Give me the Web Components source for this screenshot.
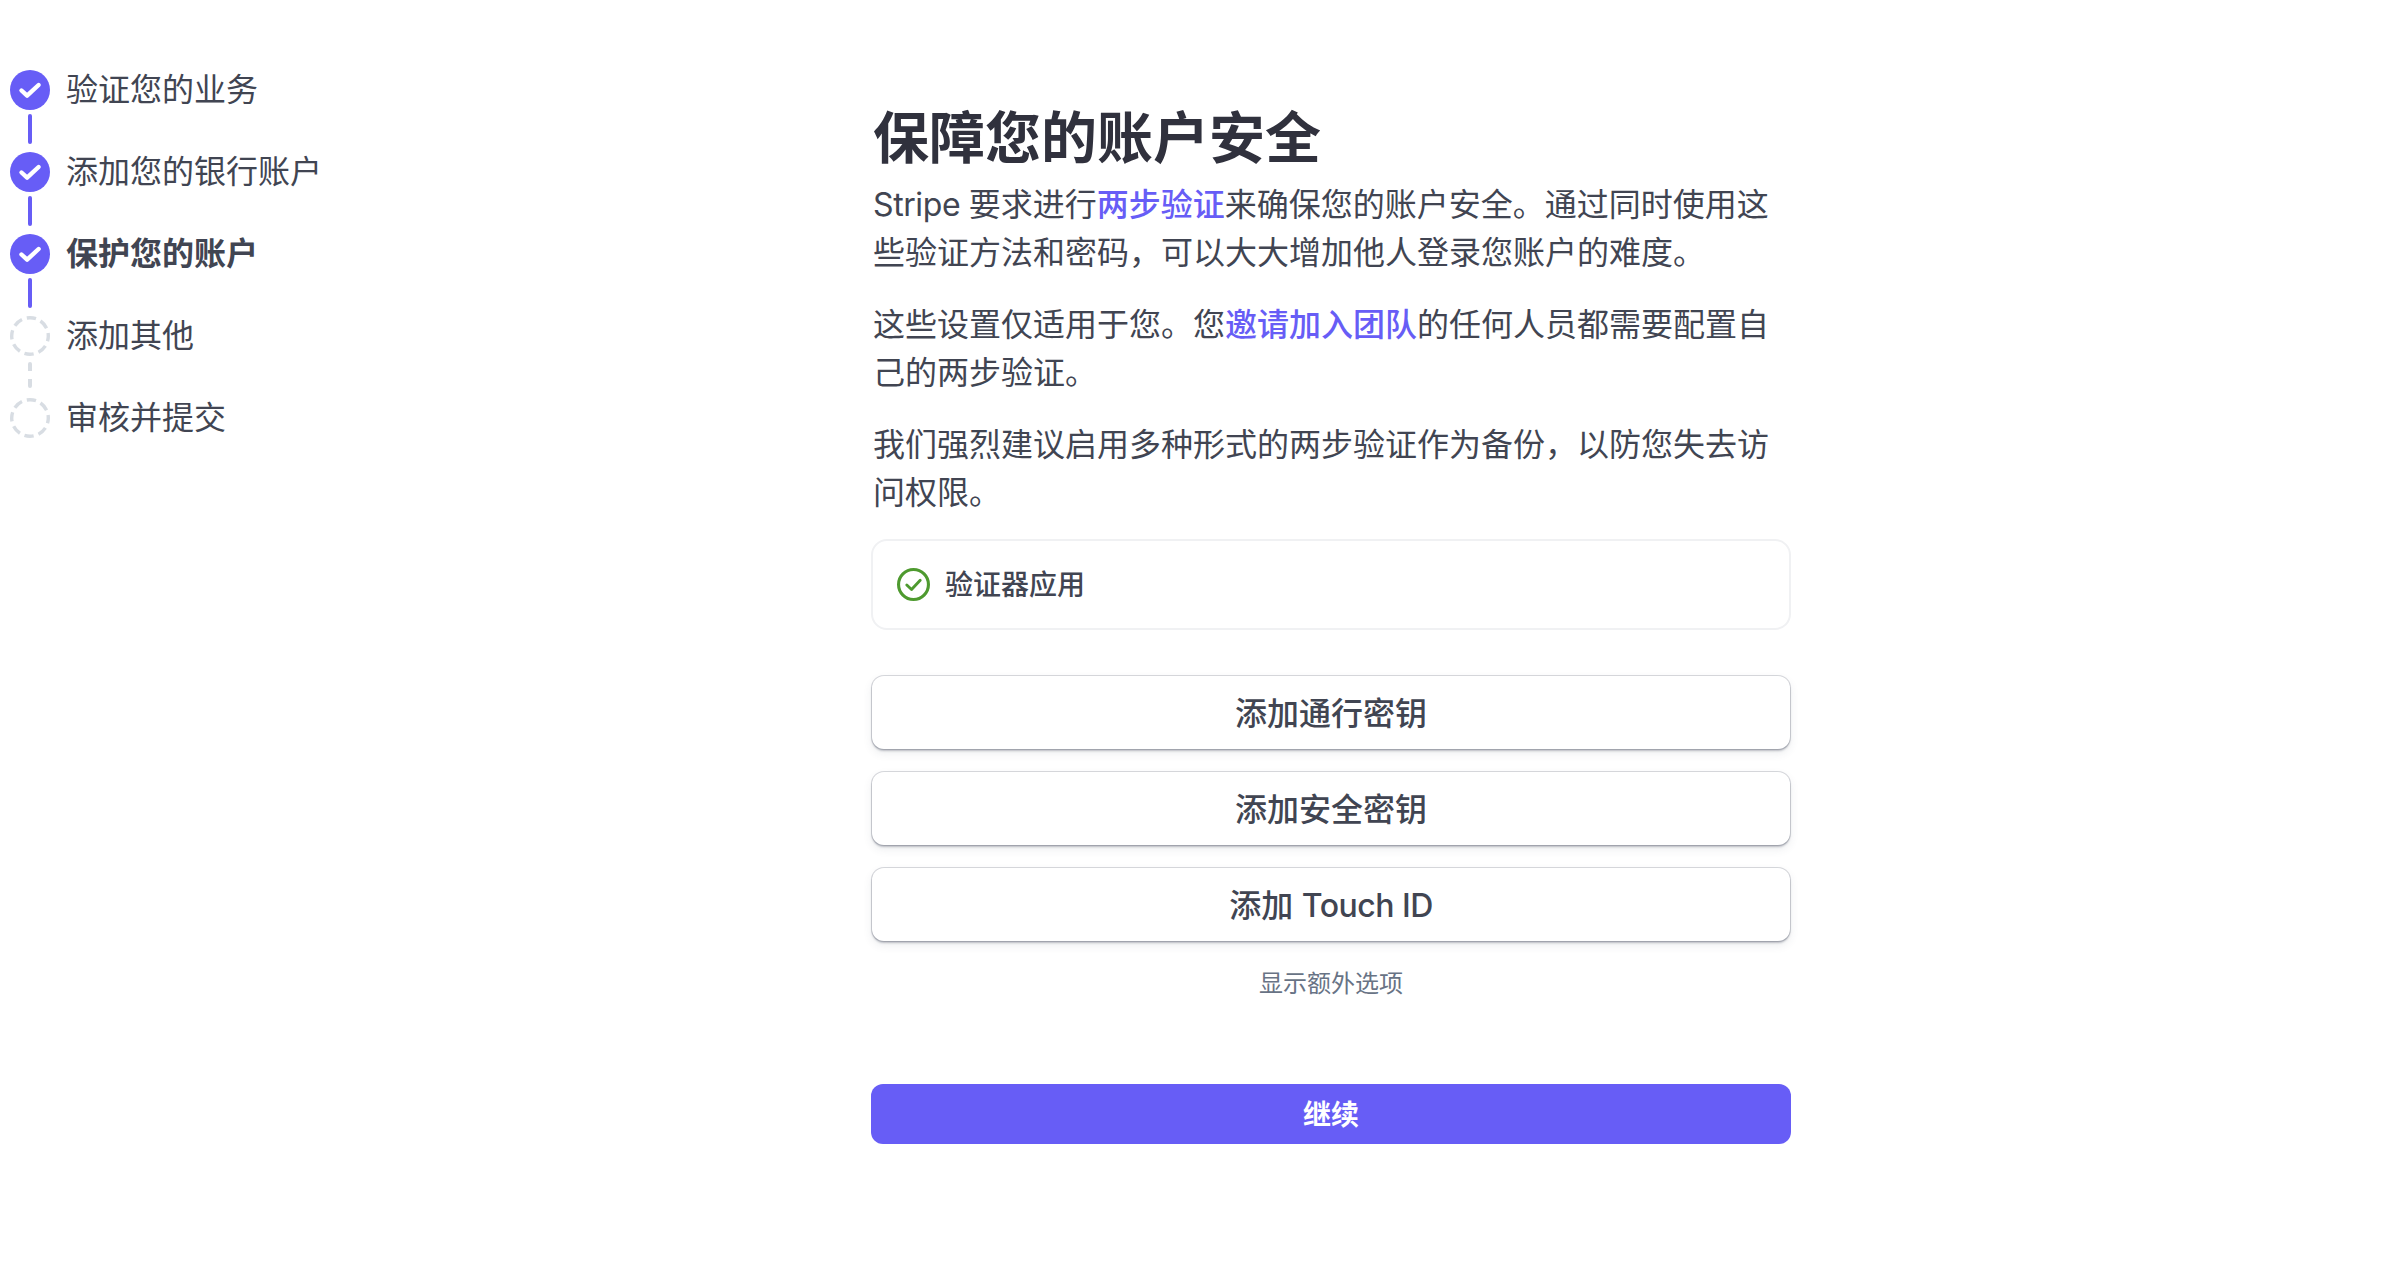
<!DOCTYPE html>
<html lang="zh">
<head>
<meta charset="utf-8">
<title>保障您的账户安全</title>
<style>
  html, body { margin: 0; background: #fff; }
  body {
    font-family: Inter, "Noto Sans CJK SC", sans-serif;
    color: #414552;
  }
  .latin { letter-spacing: -.4px; }
  .latin-btn { letter-spacing: -.5px; }
</style>
</head>
<body>
<setup-page>
  <step-list slot="nav">
    <step-item status="done">验证您的业务</step-item>
    <step-item status="done">添加您的银行账户</step-item>
    <step-item status="done" current>保护您的账户</step-item>
    <step-item status="todo">添加其他</step-item>
    <step-item status="todo" last>审核并提交</step-item>
  </step-list>

  <h-title>保障您的账户安全</h-title>
  <text-para><span class="latin">Stripe </span>要求进行<a href="#">两步验证</a>来确保您的账户安全。通过同时使用这些验证方法和密码，可以大大增加他人登录您账户的难度。</text-para>
  <text-para>这些设置仅适用于您。您<a href="#">邀请加入团队</a>的任何人员都需要配置自己的两步验证。</text-para>
  <text-para>我们强烈建议启用多种形式的两步验证作为备份，以防您失去访问权限。</text-para>
  <method-card>验证器应用</method-card>
  <action-button>添加通行密钥</action-button>
  <action-button>添加安全密钥</action-button>
  <action-button>添加 <span class="latin-btn">Touch ID</span></action-button>
  <more-link>显示额外选项</more-link>
  <action-button primary>继续</action-button>
</setup-page>

<script>
const pageTemplate = document.createElement('template');
pageTemplate.innerHTML = `
  <style>
    :host {
      display: grid;
      grid-template-columns: 871px 922px;
      min-height: 1270px;
      box-sizing: border-box;
    }
    nav { padding: 70px 0 0 10px; }
    main { padding: 98px 0 0 0; display: flex; flex-direction: column; }
  </style>
  <nav><slot name="nav"></slot></nav>
  <main><slot></slot></main>
`;

class SetupPage extends HTMLElement {
  constructor() {
    super();
    this.attachShadow({mode: 'open'});
    this.shadowRoot.append(pageTemplate.content.cloneNode(true));
  }
}

const listTemplate = document.createElement('template');
listTemplate.innerHTML = `
  <style>
    :host { display: flex; flex-direction: column; }
  </style>
  <slot></slot>
`;

class StepList extends HTMLElement {
  constructor() {
    super();
    this.attachShadow({mode: 'open'});
    this.shadowRoot.append(listTemplate.content.cloneNode(true));
  }
}

const stepTemplate = document.createElement('template');
stepTemplate.innerHTML = `
  <style>
    :host {
      display: grid;
      grid-template-columns: 40px auto;
      column-gap: 16px;
      font-size: 32px;
      line-height: 40px;
      color: #414552;
    }
    :host([current]) { font-weight: 600; }
    .icon { display: block; width: 40px; height: 40px; }
    .link {
      width: 4px;
      height: 30px;
      margin: 4px 0 8px 18px;
      border-radius: 2px;
      background: #675df6;
    }
    :host([status="todo"]) .link {
      height: 26px;
      margin: 6px 0 10px 18px;
      background: repeating-linear-gradient(#d8dde3 0 9px, transparent 9px 17px);
    }
    :host([last]) .link { display: none; }
  </style>
  <svg class="icon" viewBox="0 0 40 40"></svg>
  <span class="label"><slot></slot></span>
  <div class="link"></div>
`;

class StepItem extends HTMLElement {
  constructor() {
    super();
    this.attachShadow({mode: 'open'});
    this.shadowRoot.append(stepTemplate.content.cloneNode(true));
  }

  connectedCallback() {
    const icon = this.shadowRoot.querySelector('.icon');
    if (this.getAttribute('status') == 'done') {
      icon.innerHTML = `
        <circle cx="20" cy="20" r="20" fill="#675df6"/>
        <path d="M11.5 20.5l5.6 5.2L28.6 15" fill="none" stroke="#fff" stroke-width="4.4" stroke-linecap="round" stroke-linejoin="round"/>`;
    } else {
      icon.innerHTML = `
        <circle cx="20" cy="20" r="18.3" fill="none" stroke="#d8dde3" stroke-width="3.4" stroke-dasharray="9.4 5" stroke-dashoffset="4"/>`;
    }
  }
}

const titleTemplate = document.createElement('template');
titleTemplate.innerHTML = `
  <style>
    :host {
      display: block;
      margin: 0 0 3px 2px;
      font-size: 56px;
      line-height: 80px;
      font-weight: 700;
      color: #30313d;
    }
  </style>
  <slot></slot>
`;

class HTitle extends HTMLElement {
  constructor() {
    super();
    this.attachShadow({mode: 'open'});
    this.shadowRoot.append(titleTemplate.content.cloneNode(true));
  }
}

const paraTemplate = document.createElement('template');
paraTemplate.innerHTML = `
  <style>
    :host {
      display: block;
      margin: 0 0 24px 2px;
      width: 900px;
      font-size: 32px;
      line-height: 48px;
      color: #414552;
    }
    :host(:nth-of-type(3)) { margin-bottom: 22px; }
    ::slotted(a) { color: #675df6; text-decoration: none; font-weight: 500; }
  </style>
  <slot></slot>
`;

class TextPara extends HTMLElement {
  constructor() {
    super();
    this.attachShadow({mode: 'open'});
    this.shadowRoot.append(paraTemplate.content.cloneNode(true));
  }
}

const cardTemplate = document.createElement('template');
cardTemplate.innerHTML = `
  <style>
    :host {
      display: flex;
      align-items: center;
      gap: 16px;
      box-sizing: border-box;
      width: 920px;
      height: 91px;
      margin: 0 0 46px 0;
      padding: 0 24px 1px;
      border: 2px solid #f0f1f3;
      border-radius: 16px;
      font-size: 28px;
      font-weight: 500;
      color: #414552;
    }
    svg { display: block; width: 33px; height: 33px; flex: none; }
    span { position: relative; top: -1px; left: -1px; }
  </style>
  <svg viewBox="0 0 32 32" fill="none" stroke="#4e9a2f">
    <circle cx="16" cy="16" r="14.5" stroke-width="3"/>
    <path d="M9.5 16.5l4.6 4.4 8.4-9" stroke-width="2.8" stroke-linecap="round" stroke-linejoin="round"/>
  </svg>
  <span><slot></slot></span>
`;

class MethodCard extends HTMLElement {
  constructor() {
    super();
    this.attachShadow({mode: 'open'});
    this.shadowRoot.append(cardTemplate.content.cloneNode(true));
  }
}

const buttonTemplate = document.createElement('template');
buttonTemplate.innerHTML = `
  <style>
    :host {
      display: flex;
      align-items: center;
      justify-content: center;
      box-sizing: border-box;
      width: 918px;
      height: 73px;
      margin: 0 0 23px 1px;
      padding-bottom: 4px;
      border-radius: 12px;
      background: #fff;
      font-size: 32px;
      font-weight: 500;
      color: #414552;
      box-shadow: 0 0 0 1px rgba(60, 66, 87, .2), 0 2px 2px rgba(60, 66, 87, .3), 0 4px 10px rgba(60, 66, 87, .1);
    }
    :host([primary]) {
      width: 920px;
      height: 60px;
      margin: 0;
      padding-bottom: 2px;
      background: #675df6;
      color: #fff;
      font-size: 28px;
      font-weight: 600;
      box-shadow: none;
    }
  </style>
  <span><slot></slot></span>
`;

class ActionButton extends HTMLElement {
  constructor() {
    super();
    this.attachShadow({mode: 'open'});
    this.shadowRoot.append(buttonTemplate.content.cloneNode(true));
  }
}

const moreTemplate = document.createElement('template');
moreTemplate.innerHTML = `
  <style>
    :host {
      display: block;
      width: 918px;
      margin: 0 0 82px 1px;
      padding-top: 2px;
      text-align: center;
      font-size: 24px;
      line-height: 36px;
      color: #687385;
    }
  </style>
  <slot></slot>
`;

class MoreLink extends HTMLElement {
  constructor() {
    super();
    this.attachShadow({mode: 'open'});
    this.shadowRoot.append(moreTemplate.content.cloneNode(true));
  }
}

customElements.define('setup-page', SetupPage);
customElements.define('step-list', StepList);
customElements.define('step-item', StepItem);
customElements.define('h-title', HTitle);
customElements.define('text-para', TextPara);
customElements.define('method-card', MethodCard);
customElements.define('action-button', ActionButton);
customElements.define('more-link', MoreLink);
</script>
</body>
</html>
